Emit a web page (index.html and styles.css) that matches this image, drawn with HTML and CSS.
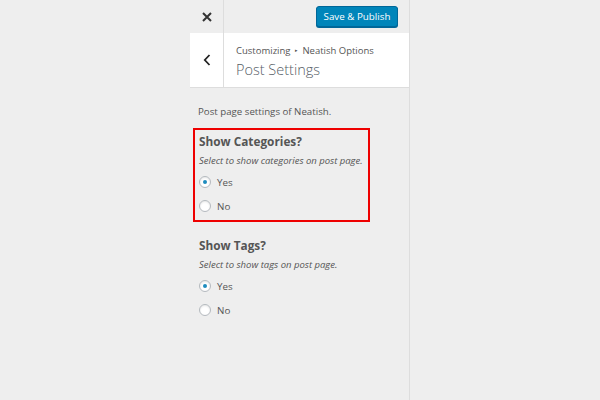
FILE: index.html
```html
<!DOCTYPE html>
<html>
<head>
<meta charset="utf-8">
<link rel="stylesheet" href="styles.css">
</head>
<body>
<div class="sidebar">
  <div class="header">
    <div class="close">
      <svg width="10" height="10" viewBox="0 0 10 10"><path d="M1 1L9 9M9 1L1 9" stroke="#333" stroke-width="2"/></svg>
    </div>
    <div class="header-actions">
      <button class="publish">Save &amp; Publish</button>
    </div>
  </div>
  <div class="section-title">
    <div class="back">
      <svg width="8" height="12" viewBox="0 0 8 12"><path d="M6.5 1L1.8 6L6.5 11" fill="none" stroke="#222" stroke-width="1.8"/></svg>
    </div>
    <div class="titles">
      <div class="crumb">Customizing <span class="sep">▸</span> Neatish Options</div>
      <div class="title">Post Settings</div>
    </div>
  </div>
  <div class="content">
    <p class="desc">Post page settings of Neatish.</p>
    <div class="control highlighted">
      <div class="label">Show Categories?</div>
      <div class="help">Select to show categories on post page.</div>
      <div class="radio"><span class="dot checked"></span><span>Yes</span></div>
      <div class="radio"><span class="dot"></span><span>No</span></div>
    </div>
    <div class="control">
      <div class="label">Show Tags?</div>
      <div class="help">Select to show tags on post page.</div>
      <div class="radio"><span class="dot checked"></span><span>Yes</span></div>
      <div class="radio"><span class="dot"></span><span>No</span></div>
    </div>
  </div>
</div>
</body>
</html>
```

FILE: styles.css
```css
html, body {
  margin: 0;
  padding: 0;
  background: #eeeeee;
  font-family: "Open Sans", "Liberation Sans", sans-serif;
  color: #555;
}
.sidebar {
  margin-left: 190px;
  width: 219px;
  height: 400px;
  border-right: 1px solid #dddddd;
  box-sizing: content-box;
}
.header {
  height: 33px;
  display: flex;
  align-items: center;
}
.close {
  width: 34px;
  height: 33px;
  border-right: 1px solid #dddddd;
  display: flex;
  align-items: center;
  justify-content: center;
  box-sizing: border-box;
}
.header-actions {
  flex: 1;
  display: flex;
  justify-content: flex-end;
  padding-right: 11px;
}
.publish {
  height: 21px;
  width: 82px;
  padding: 0;
  background: #0085ba;
  border: 1px solid #006799;
  border-radius: 3px;
  color: #fff;
  font-family: "Open Sans", "Liberation Sans", sans-serif;
  font-size: 9.8px;
  font-weight: 400;
  box-shadow: 0 1px 0 #006799;
}
.section-title {
  height: 54px;
  background: #fff;
  display: flex;
  border-bottom: 1px solid #dddddd;
}
.back {
  width: 34px;
  border-right: 1px solid #dddddd;
  display: flex;
  align-items: center;
  justify-content: center;
  box-sizing: border-box;
}
.titles {
  padding: 10px 0 0 12px;
}
.crumb {
  font-size: 9.5px;
  line-height: 14px;
  color: #555;
}
.sep {
  font-size: 5px;
  vertical-align: 2px;
  margin: 0 2px;
}
.title {
  font-size: 14.5px;
  font-weight: 300;
  line-height: 20px;
  margin-top: 2px;
  color: #555d66;
}
.content {
  padding: 17px 0 0 3px;
}
.desc {
  margin: 0 0 9px 5px;
  font-size: 9.7px;
  line-height: 14px;
}
.control {
  width: 169px;
  padding: 3px 0 2px 4px;
  border: 2px solid transparent;
  margin-bottom: 10px;
}
.control.highlighted {
  border-color: #ee0000;
}
.label {
  font-size: 11.8px;
  font-weight: 700;
  line-height: 16px;
  color: #555;
}
.help {
  font-size: 9.5px;
  font-style: italic;
  line-height: 14px;
  margin-top: 5px;
  margin-bottom: 2px;
  white-space: nowrap;
}
.radio {
  display: flex;
  align-items: center;
  height: 24px;
  font-size: 9.8px;
}
.dot {
  width: 10px;
  height: 10px;
  border: 1px solid #b4b9be;
  border-radius: 50%;
  background: #fff;
  margin-right: 6px;
  position: relative;
  box-shadow: inset 0 1px 2px rgba(0,0,0,0.1);
}
.dot.checked::after {
  content: "";
  position: absolute;
  left: 3px;
  top: 3px;
  width: 4px;
  height: 4px;
  border-radius: 50%;
  background: #1e8cbe;
}
```
